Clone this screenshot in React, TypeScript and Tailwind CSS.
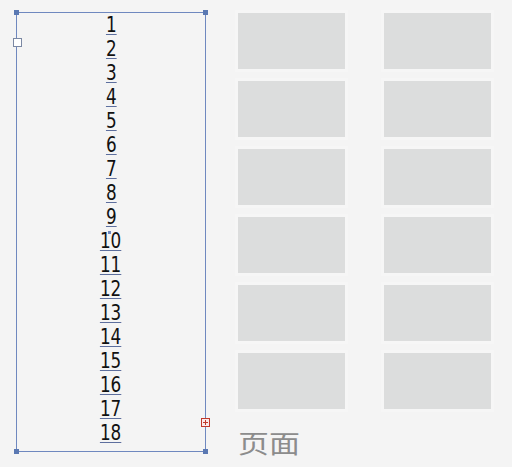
import React from 'react'

const numbers = Array.from({ length: 18 }, (_, i) => i + 1)
const tiles = Array.from({ length: 12 }, (_, i) => i)

export default function App() {
  return (
    <div className="w-[512px] h-[467px] bg-[#f4f4f4] flex overflow-hidden">
      {/* Text frame */}
      <div className="relative ml-[16px] mt-[12px] w-[190px] h-[440px] border border-[#6f88bf]">
        {/* Corner handles */}
        <div className="absolute -left-[3px] -top-[3px] w-[5px] h-[5px] bg-[#5a78b2]" />
        <div className="absolute -right-[3px] -top-[3px] w-[5px] h-[5px] bg-[#5a78b2]" />
        <div className="absolute -left-[3px] -bottom-[3px] w-[5px] h-[5px] bg-[#5a78b2]" />
        <div className="absolute -right-[3px] -bottom-[3px] w-[5px] h-[5px] bg-[#5a78b2]" />
        {/* In port */}
        <div className="absolute -left-[4px] top-[25px] w-[9px] h-[9px] border border-[#7b88a3] bg-white" />
        {/* Overset marker */}
        <div className="absolute -right-[5px] top-[405px] w-[9px] h-[9px] border border-[#c0392b] bg-[#fbe9e9] flex items-center justify-center">
          <svg width="7" height="7" viewBox="0 0 7 7">
            <path d="M3.5 1v5M1 3.5h5" stroke="#c0392b" strokeWidth="1" />
          </svg>
        </div>
        {/* Cursor dot */}
        <div className="absolute left-[91px] top-[218px] w-[3px] h-[3px] bg-[#6f88bf]" />

        <div
          className="flex flex-col items-center text-[22px] leading-[24px] text-[#111]"
          style={{ fontFamily: '"DejaVu Sans Condensed", "Liberation Sans Narrow", "Liberation Sans", sans-serif' }}
        >
          {numbers.map((n) => (
            <span
              key={n}
              className="underline decoration-[#5d6f9e] decoration-1 underline-offset-[2px] px-[1px] scale-x-[0.85]"
            >
              {n}
            </span>
          ))}
        </div>
      </div>

      {/* Pages panel */}
      <div className="ml-[32px] mt-[13px] flex flex-col">
        <div className="grid grid-cols-[107px_107px] gap-x-[39px] gap-y-[12px]">
          {tiles.map((t) => (
            <div
              key={t}
              className="h-[56px] bg-[#dcdddd] shadow-[0_0_0_3px_#f6f6f6]"
            />
          ))}
        </div>
        <div
          className="mt-[19px] text-[31px] leading-[30px] text-[#8c8c8c] scale-y-[0.8] origin-center self-start"
          style={{ fontFamily: '"Noto Sans CJK SC", sans-serif' }}
        >
          页面
        </div>
      </div>
    </div>
  )
}
